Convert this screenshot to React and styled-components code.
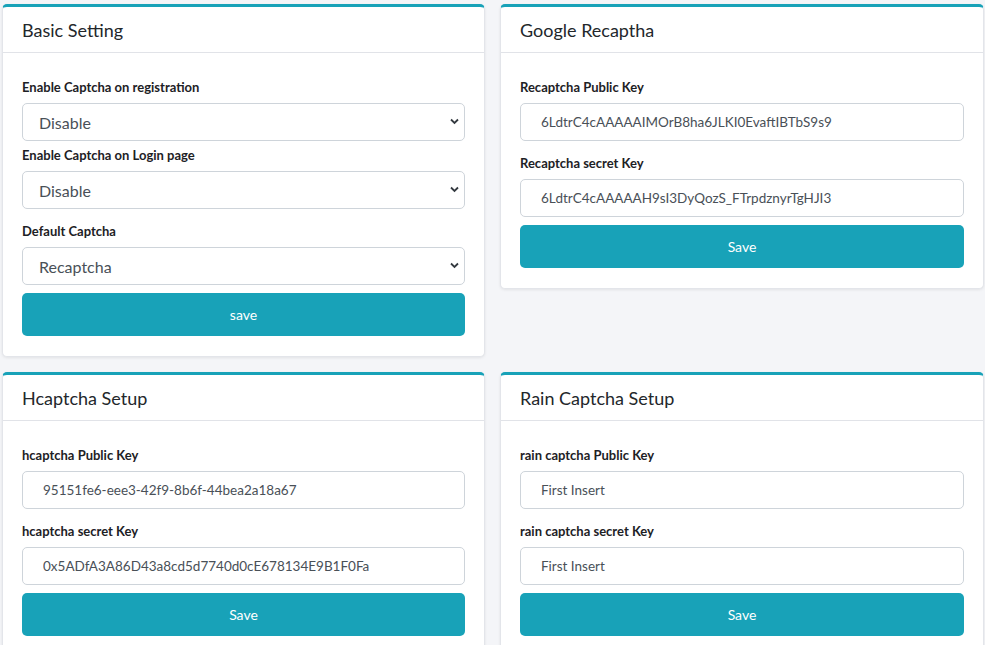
import React from "react";
import styled, { createGlobalStyle } from "styled-components";

const Global = createGlobalStyle`
  html, body { margin: 0; padding: 0; background: #f4f5f8; overflow: hidden; }
  body { font-family: "Segoe UI", Lato, "Noto Sans", sans-serif; color: #212529; }
  * { box-sizing: border-box; }
`;

const Page = styled.div`
  width: 985px;
  height: 645px;
  padding: 4px 1px 0 2px;
  display: grid;
  grid-template-columns: 483px 1fr;
  column-gap: 15px;
  row-gap: 15px;
  align-items: start;
  align-content: start;
`;

const Card = styled.section`
  background: #fff;
  border: 1px solid #e3e5ea;
  border-top: 3px solid #18a2b8;
  border-radius: 5px;
  box-shadow: 0 1px 3px rgba(0, 0, 0, 0.08);
`;

const CardHeader = styled.header`
  padding: 11px 19px 10px;
  border-bottom: 1px solid #e1e3e8;
`;

const Title = styled.h3`
  margin: 0;
  font-size: 18px;
  line-height: 24px;
  font-weight: 400;
  color: #23272b;
`;

const CardBody = styled.div`
  padding: 24px 19px 20px;
  display: flex;
  flex-direction: column;
`;

const Label = styled.label`
  display: block;
  font-size: 13px;
  line-height: 20px;
  font-weight: 700;
  color: #1d2125;
  margin: ${(p) => p.$top || 0}px 0 6px;
`;

const fieldBase = `
  width: 100%;
  height: 38px;
  border: 1px solid #ced4da;
  border-radius: 5px;
  background: #fff;
  color: #495057;
  font-family: inherit;
  outline: none;
`;

const Input = styled.input`
  ${fieldBase}
  padding: 0 20px;
  font-size: 13.5px;
`;

const SelectWrap = styled.div`
  position: relative;
`;

const Select = styled.select`
  ${fieldBase}
  appearance: none;
  -webkit-appearance: none;
  padding: 0 16px;
  font-size: 16px;
`;

const Chevron = styled.svg`
  position: absolute;
  right: 6px;
  top: 15px;
  width: 9px;
  height: 7px;
  pointer-events: none;
`;

const Button = styled.button`
  margin-top: 8px;
  width: 100%;
  height: 43px;
  border: none;
  border-radius: 5px;
  background: #18a2b8;
  color: #fff;
  font-family: inherit;
  font-size: 14px;
  cursor: pointer;
`;

const Dropdown = ({ value, options }) => (
  <SelectWrap>
    <Select defaultValue={value}>
      {options.map((o) => (
        <option key={o}>{o}</option>
      ))}
    </Select>
    <Chevron viewBox="0 0 9 7">
      <path d="M1 1.5 L4.5 5 L8 1.5" fill="none" stroke="#343a40" strokeWidth="1.8" />
    </Chevron>
  </SelectWrap>
);

const KeyCard = ({ title, fields, button }) => (
  <Card>
    <CardHeader>
      <Title>{title}</Title>
    </CardHeader>
    <CardBody>
      {fields.map((f, i) => (
        <React.Fragment key={f.label}>
          <Label $top={i === 0 ? 0 : 12}>{f.label}</Label>
          <Input defaultValue={f.value} />
        </React.Fragment>
      ))}
      <Button>{button}</Button>
    </CardBody>
  </Card>
);

export default function App() {
  return (
    <>
      <Global />
      <Page>
        <Card>
          <CardHeader>
            <Title>Basic Setting</Title>
          </CardHeader>
          <CardBody>
            <Label>Enable Captcha on registration</Label>
            <Dropdown value="Disable" options={["Disable", "Enable"]} />
            <Label $top={4}>Enable Captcha on Login page</Label>
            <Dropdown value="Disable" options={["Disable", "Enable"]} />
            <Label $top={12}>Default Captcha</Label>
            <Dropdown value="Recaptcha" options={["Recaptcha", "Hcaptcha", "Rain Captcha"]} />
            <Button>save</Button>
          </CardBody>
        </Card>
        <KeyCard
          title="Google Recaptha"
          button="Save"
          fields={[
            { label: "Recaptcha Public Key", value: "6LdtrC4cAAAAAIMOrB8ha6JLKI0EvaftIBTbS9s9" },
            { label: "Recaptcha secret Key", value: "6LdtrC4cAAAAAH9sI3DyQozS_FTrpdznyrTgHJI3" },
          ]}
        />
        <KeyCard
          title="Hcaptcha Setup"
          button="Save"
          fields={[
            { label: "hcaptcha Public Key", value: "95151fe6-eee3-42f9-8b6f-44bea2a18a67" },
            { label: "hcaptcha secret Key", value: "0x5ADfA3A86D43a8cd5d7740d0cE678134E9B1F0Fa" },
          ]}
        />
        <KeyCard
          title="Rain Captcha Setup"
          button="Save"
          fields={[
            { label: "rain captcha Public Key", value: "First Insert" },
            { label: "rain captcha secret Key", value: "First Insert" },
          ]}
        />
      </Page>
    </>
  );
}
